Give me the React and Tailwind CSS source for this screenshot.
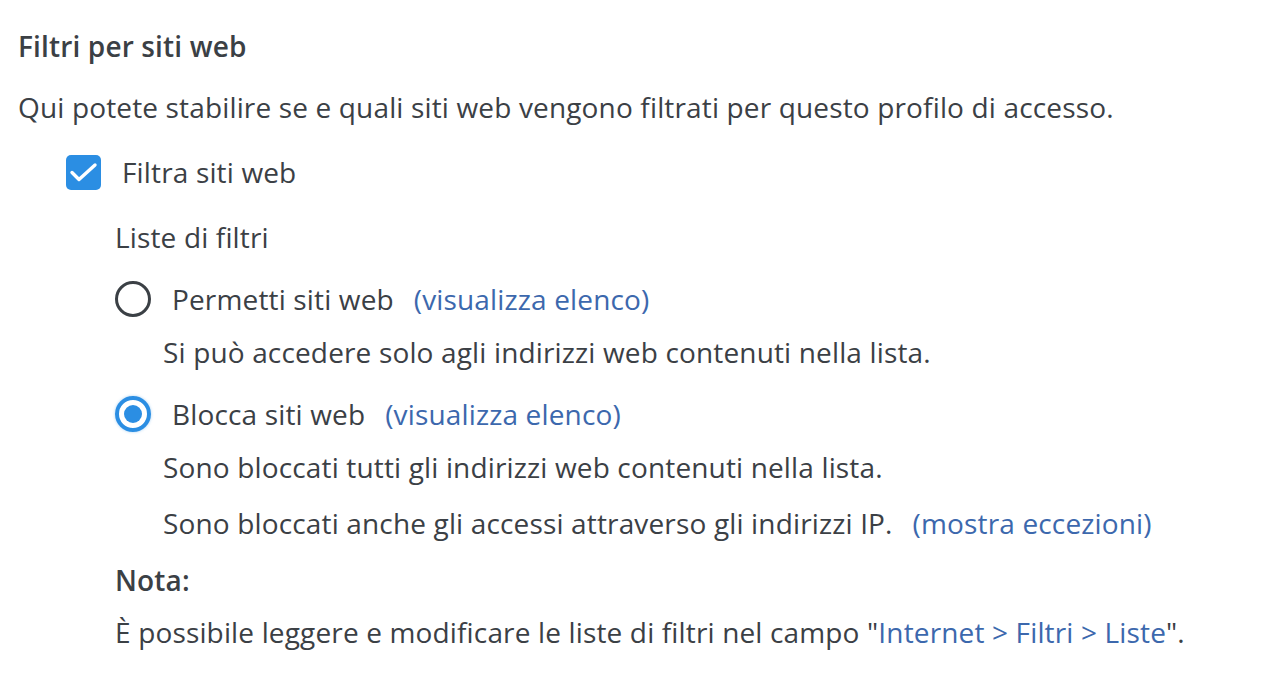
import React from "react";

const font = { fontFamily: "'Open Sans', Lato, sans-serif" };

function Row({ className = "", children }) {
  return <div className={"h-[40px] flex items-center whitespace-nowrap " + className}>{children}</div>;
}

export default function App() {
  return (
    <div className="w-[1278px] h-[678px] bg-white text-[#3b4045] text-[28px] tracking-[0.15px] overflow-hidden" style={font}>
      <div className="pl-[18px] pt-[26px]">
        <Row className="font-semibold">Filtri per siti web</Row>
        <Row className="mt-[21px]">Qui potete stabilire se e quali siti web vengono filtrati per questo profilo di accesso.</Row>
        <Row className="mt-[25px] pl-[48px]">
          <span className="w-[35px] h-[35px] shrink-0 rounded-[5px] bg-[#2b8ee3] block">
            <svg width="35" height="35" viewBox="0 0 35 35" fill="none" stroke="white" strokeWidth="3.4" strokeLinecap="round" strokeLinejoin="round">
              <path d="M6 17.5l7 7L29 10" />
            </svg>
          </span>
          <span className="ml-[21px]">Filtra siti web</span>
        </Row>
        <div className="pl-[97px]">
          <Row className="mt-[25px]">Liste di filtri</Row>
          <Row className="mt-[22px]">
            <span className="w-[36px] h-[36px] shrink-0 rounded-full border-[3px] border-[#3b4045] box-border" />
            <span className="ml-[21px]">Permetti siti web</span>
            <span className="ml-[20px] text-[#3c68ad]">(visualizza elenco)</span>
          </Row>
          <Row className="mt-[13px] pl-[48px]">Si può accedere solo agli indirizzi web contenuti nella lista.</Row>
          <Row className="mt-[22px]">
            <span className="w-[36px] h-[36px] shrink-0 rounded-full border-[4px] border-[#2b8ee3] box-border flex items-center justify-center shadow-[0_0_3px_0px_rgba(43,142,227,0.4)]">
              <span className="w-[18px] h-[18px] rounded-full bg-[#2b8ee3]" />
            </span>
            <span className="ml-[21px]">Blocca siti web</span>
            <span className="ml-[20px] text-[#3c68ad]">(visualizza elenco)</span>
          </Row>
          <Row className="mt-[13px] pl-[48px]">Sono bloccati tutti gli indirizzi web contenuti nella lista.</Row>
          <Row className="mt-[16px] pl-[48px]">
            <span>Sono bloccati anche gli accessi attraverso gli indirizzi IP.</span>
            <span className="ml-[20px] text-[#3c68ad]">(mostra eccezioni)</span>
          </Row>
          <Row className="mt-[17px] font-semibold">Nota:</Row>
          <Row className="mt-[12px]">
            <span>
              È possibile leggere e modificare le liste di filtri nel campo "<span className="text-[#3c68ad]">Internet &gt; Filtri &gt; Liste</span>".
            </span>
          </Row>
        </div>
      </div>
    </div>
  );
}
